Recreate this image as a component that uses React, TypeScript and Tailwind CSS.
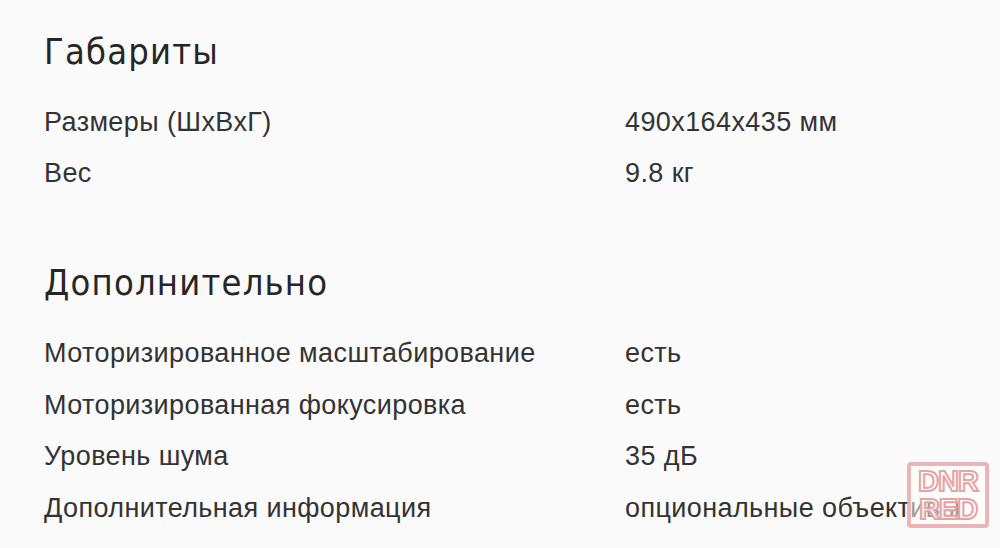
import React from "react"

const sections = [
  {
    title: "Габариты",
    rows: [
      ["Размеры (ШхВхГ)", "490x164x435 мм"],
      ["Вес", "9.8 кг"],
    ],
  },
  {
    title: "Дополнительно",
    rows: [
      ["Моторизированное масштабирование", "есть"],
      ["Моторизированная фокусировка", "есть"],
      ["Уровень шума", "35 дБ"],
      ["Дополнительная информация", "опциональные объективы"],
    ],
  },
]

export default function App() {
  return (
    <div className="relative w-[1000px] h-[548px] overflow-hidden bg-[#fafafa] text-[#333] font-['Liberation_Sans',Arial,sans-serif]">
      <div className="pl-[44px] pt-[29px]">
        {sections.map((s, i) => (
          <div key={s.title} className={i > 0 ? "mt-[61px]" : ""}>
            <h2 className="text-[36px] leading-[46px] font-normal tracking-[1.2px] text-[#262626] font-['DejaVu_Sans',sans-serif] [font-stretch:condensed] mb-[21px]">
              {s.title}
            </h2>
            {s.rows.map(([k, v]) => (
              <div key={k} className="flex h-[51.7px] items-center text-[27px] tracking-[0.4px]">
                <div className="w-[581px]">{k}</div>
                <div>{v}</div>
              </div>
            ))}
          </div>
        ))}
      </div>

      {/* watermark */}
      <div className="absolute left-[907px] top-[462px] w-[82px] h-[66px] rounded-[4px] border-[4px] border-[#e6a3a3]/80 bg-white/50 flex flex-col items-center justify-center font-['Liberation_Sans',sans-serif] font-bold text-[29px] text-white/80 [-webkit-text-stroke:2px_#e6a3a3]">
        <span className="leading-[28px] tracking-[-1px]">DNR</span>
        <span className="leading-[28px] tracking-[-1px]">RED</span>
      </div>
    </div>
  )
}
